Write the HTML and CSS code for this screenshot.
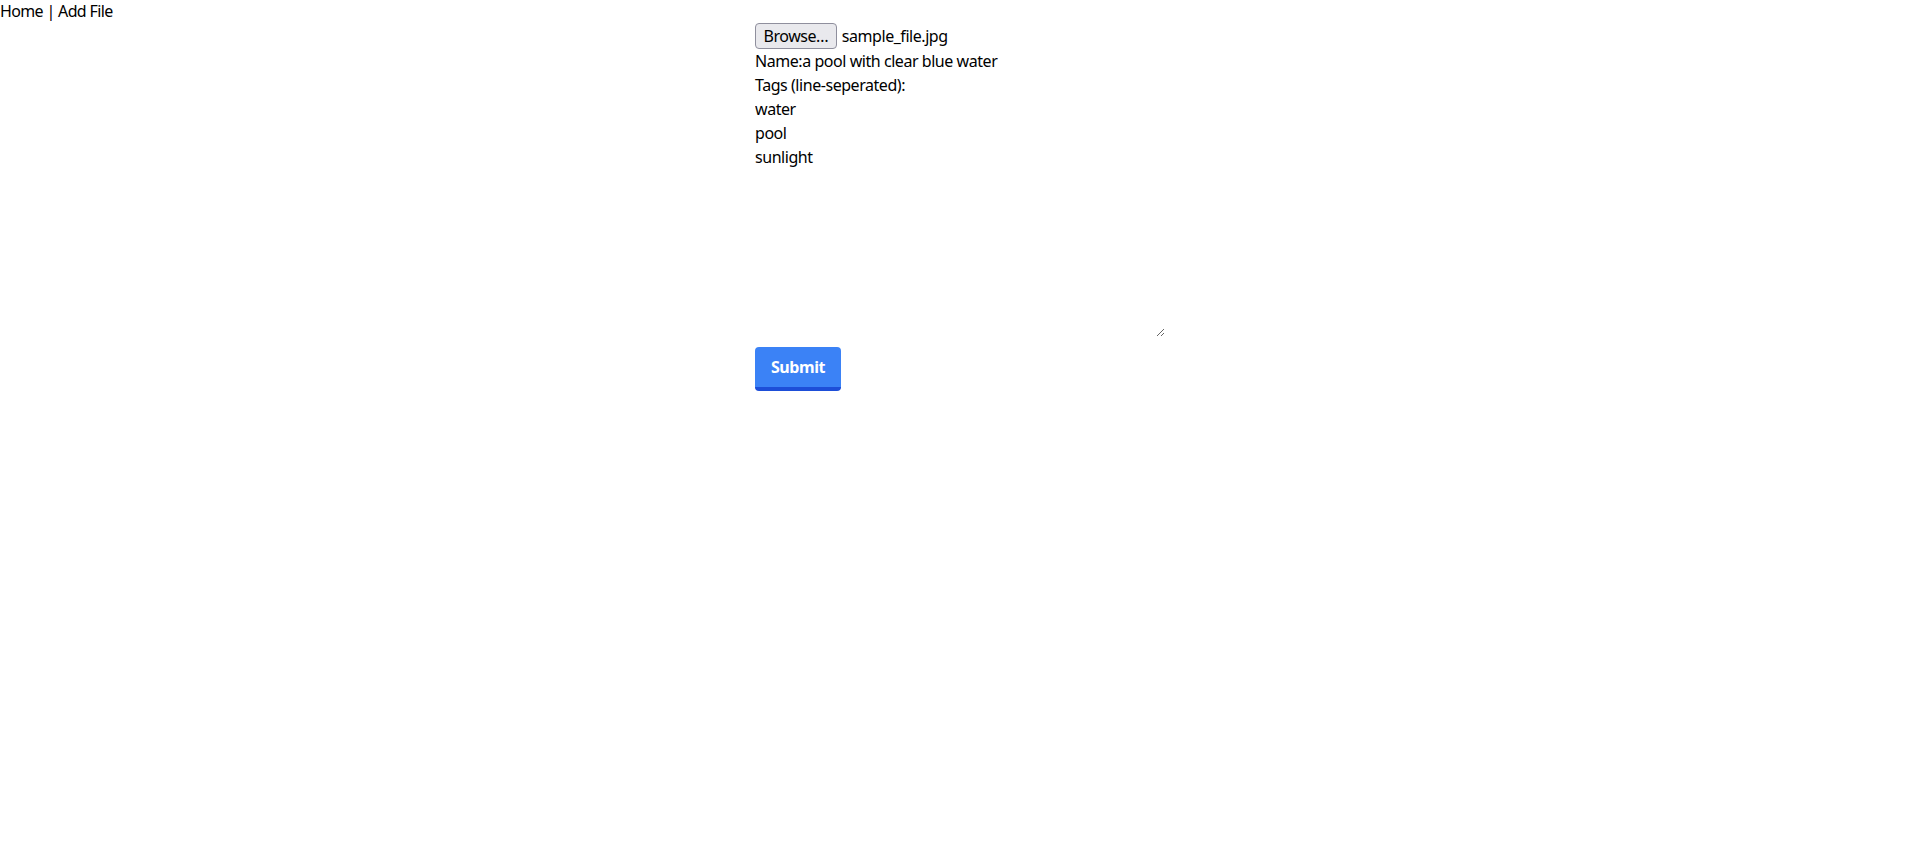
FILE: index.html
```html
<!DOCTYPE html>
<html lang="en">
<head>
<meta charset="utf-8">
<title>Add File</title>
<link rel="stylesheet" href="styles.css">
</head>
<body>
<div class="nav">Home | Add File</div>
<form class="form">
  <div class="file-row">
    <span class="browse">Browse…</span>
    <span class="file-name">sample_file.jpg</span>
  </div>
  <div class="line">Name:a pool with clear blue water</div>
  <div class="line">Tags (line-seperated):</div>
  <textarea class="tags" rows="10">water
pool
sunlight</textarea>
  <button type="button" class="submit">Submit</button>
</form>
</body>
</html>
```

FILE: styles.css
```css
html, body {
  margin: 0;
  padding: 0;
  background: #fff;
}
body {
  font-family: "Noto Sans", "Open Sans", sans-serif;
  font-size: 16px;
  line-height: 24px;
  letter-spacing: -0.45px;
  color: #000;
}
.nav {
  height: 23px;
  line-height: 22px;
  letter-spacing: -0.65px;
}
.form {
  width: 410px;
  margin: 0 auto;
  display: flex;
  flex-direction: column;
  align-items: flex-start;
}
.file-row {
  display: flex;
  align-items: center;
  gap: 5px;
  height: 26px;
}
.browse {
  box-sizing: border-box;
  height: 26px;
  padding: 0 7.5px;
  line-height: 24px;
  border: 1px solid #8f8f9d;
  border-radius: 4px;
  background: #e9e9ed;
  color: #000;
}
.line {
  height: 24px;
}
.tags {
  box-sizing: border-box;
  width: 410px;
  height: 240px;
  margin: 0 0 10px 0;
  padding: 0;
  border: 0;
  outline: none;
  font: inherit;
  letter-spacing: -0.45px;
  line-height: 24px;
  color: #000;
  background: transparent;
  resize: both;
}
.submit {
  box-sizing: border-box;
  height: 44px;
  padding: 0 16px;
  border: 0;
  border-bottom: 4px solid #1d4ed8;
  border-radius: 4px;
  background: #3b82f6;
  color: #fff;
  font: inherit;
  font-weight: 700;
  letter-spacing: -0.45px;
  line-height: 24px;
}
```
